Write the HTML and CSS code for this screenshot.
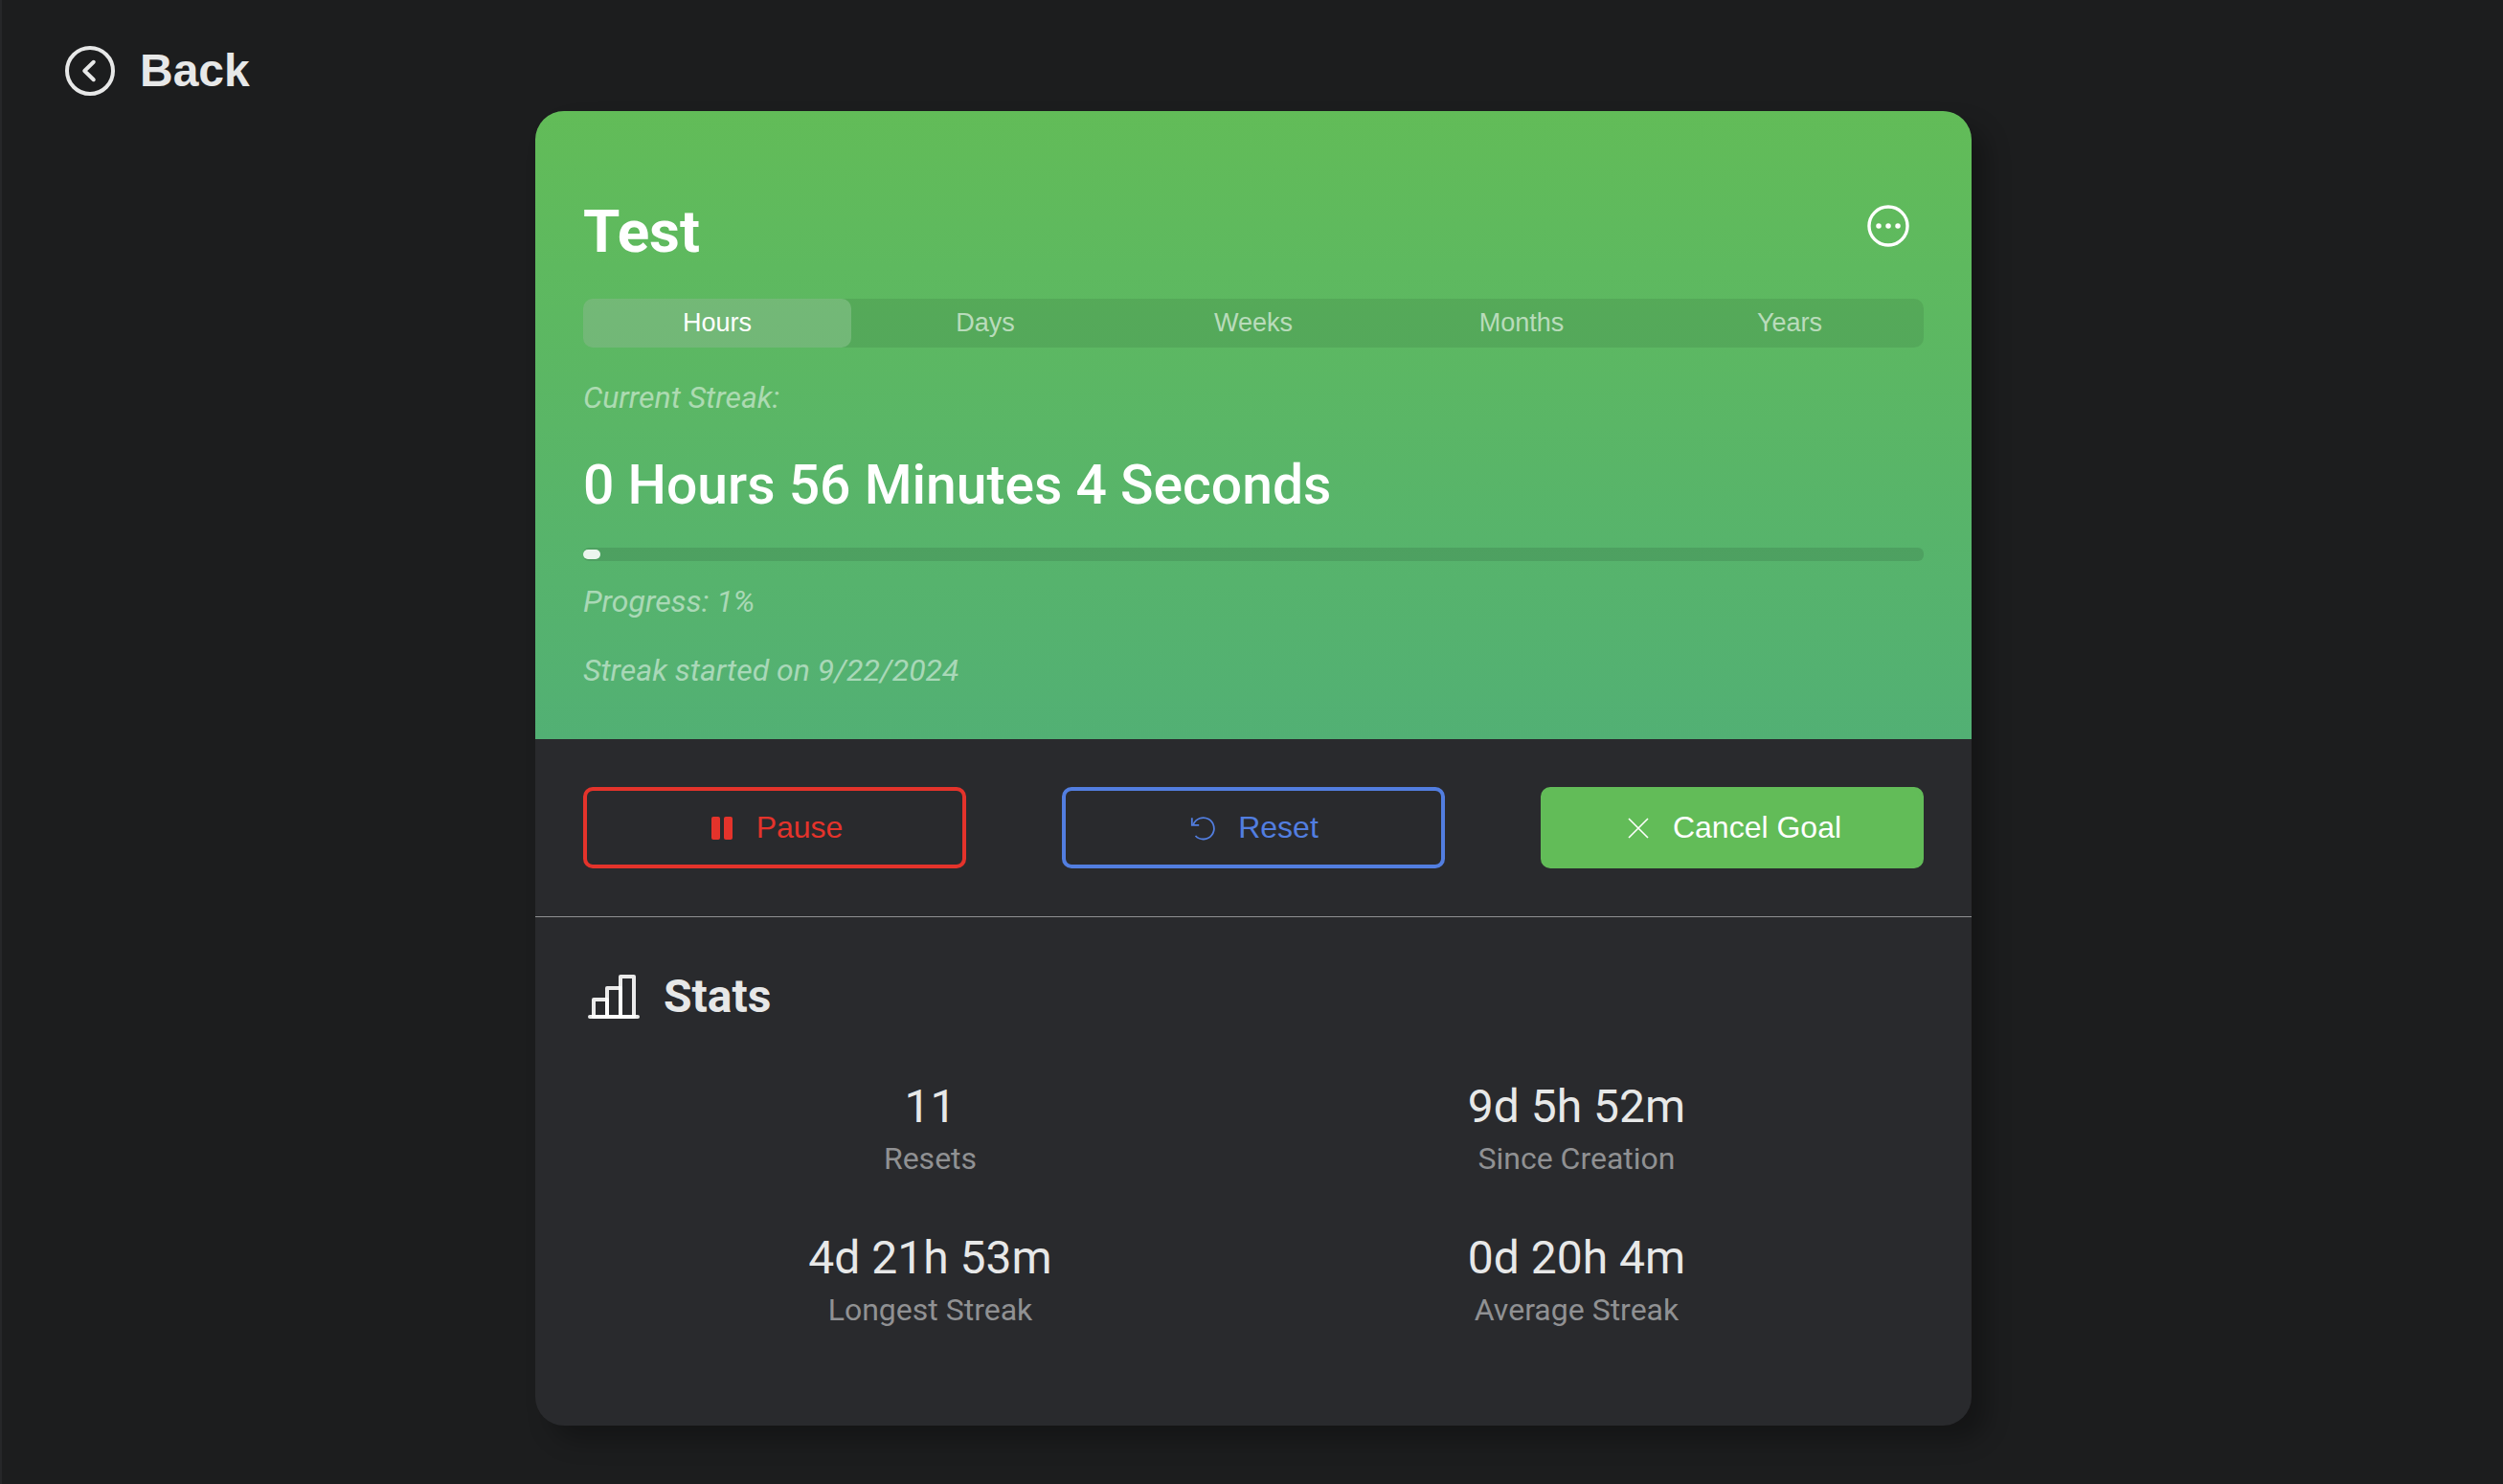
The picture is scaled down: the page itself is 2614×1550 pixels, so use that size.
FILE: index.html
```html
<!DOCTYPE html>
<html lang="en">
<head>
  <meta charset="utf-8">
  <meta name="viewport" content="width=device-width, initial-scale=1">
  <title>Test</title>
  <link rel="stylesheet" href="styles.css">
</head>
<body>
  <nav class="topbar">
    <a class="back" href="#">
      <svg class="icon-lg" viewBox="0 0 512 512" fill="none" stroke="currentColor" stroke-width="32" stroke-linecap="round" stroke-linejoin="round" aria-hidden="true">
        <circle cx="256" cy="256" r="192"/>
        <path d="M286 182l-76 74 76 74"/>
      </svg>
      Back
    </a>
  </nav>

  <main class="card">
    <header class="hero">
      <div class="hero-head">
        <h1 class="title">Test</h1>
        <button class="menu" type="button" aria-label="More options">
          <svg class="icon-md" viewBox="0 0 512 512" aria-hidden="true">
            <circle cx="256" cy="256" r="190" fill="none" stroke="currentColor" stroke-width="32"/>
            <g fill="currentColor">
              <circle cx="161" cy="256" r="26"/>
              <circle cx="256" cy="256" r="26"/>
              <circle cx="351" cy="256" r="26"/>
            </g>
          </svg>
        </button>
      </div>
      <div class="tabs" role="tablist" aria-label="Unit">
        <button class="tab tab-active" type="button" role="tab" aria-selected="true">Hours</button>
        <button class="tab" type="button" role="tab" aria-selected="false">Days</button>
        <button class="tab" type="button" role="tab" aria-selected="false">Weeks</button>
        <button class="tab" type="button" role="tab" aria-selected="false">Months</button>
        <button class="tab" type="button" role="tab" aria-selected="false">Years</button>
      </div>
      <p class="note">Current Streak:</p>
      <p class="streak">0 Hours 56 Minutes 4 Seconds</p>
      <div class="track" role="progressbar" aria-label="Progress" aria-valuemin="0" aria-valuemax="100" aria-valuenow="1">
        <div class="fill" style="width: 1%"></div>
      </div>
      <p class="note note-progress">Progress: 1%</p>
      <p class="note note-start">Streak started on 9/22/2024</p>
    </header>

    <section class="actions" aria-label="Actions">
      <button class="btn btn-pause" type="button">
        <svg class="icon-sm" viewBox="0 0 32 32" fill="currentColor" aria-hidden="true">
          <rect x="5" y="4" width="9" height="24" rx="2"/>
          <rect x="18" y="4" width="9" height="24" rx="2"/>
        </svg>
        Pause
      </button>
      <button class="btn btn-reset" type="button">
        <svg class="icon-sm" viewBox="0 0 32 32" fill="none" stroke="currentColor" stroke-width="1.8" stroke-linejoin="miter" aria-hidden="true">
          <path d="M7.5 24A11.2 11.2 0 1 0 5.2 12.3"/>
          <path d="M3.8 5.2v7.6h7.4"/>
        </svg>
        Reset
      </button>
      <button class="btn btn-cancel" type="button">
        <svg class="icon-sm" viewBox="0 0 32 32" fill="none" stroke="currentColor" stroke-width="1.6" aria-hidden="true">
          <path d="M6 6l20 20M26 6L6 26"/>
        </svg>
        Cancel Goal
      </button>
    </section>

    <section class="stats">
      <h2 class="stats-title">
        <svg class="icon-lg" viewBox="0 0 64 64" fill="none" stroke="currentColor" stroke-opacity="0.9" stroke-width="4" stroke-linejoin="round" stroke-linecap="round" aria-hidden="true">
          <rect x="11" y="35" width="14" height="18"/>
          <rect x="25" y="23" width="14" height="30"/>
          <rect x="39" y="11" width="14" height="42"/>
          <path d="M7 53h50"/>
        </svg>
        Stats
      </h2>
      <dl class="stats-grid">
        <div class="stat"><dd class="value">11</dd><dt class="label">Resets</dt></div>
        <div class="stat"><dd class="value">9d 5h 52m</dd><dt class="label">Since Creation</dt></div>
        <div class="stat"><dd class="value">4d 21h 53m</dd><dt class="label">Longest Streak</dt></div>
        <div class="stat"><dd class="value">0d 20h 4m</dd><dt class="label">Average Streak</dt></div>
      </dl>
    </section>
  </main>
</body>
</html>
```
FILE: styles.css
```css
* {
  box-sizing: border-box;
  margin: 0;
}

body {
  min-height: 100vh;
  padding-left: 2px;
  border-left: 2px solid #262729;
  background: #1c1d1e;
  color: #e7e8e8;
  font-family: Roboto, "Liberation Sans", sans-serif;
}

button {
  border: 0;
  padding: 0;
  background: none;
  color: inherit;
  font-family: "Liberation Sans", Arial, sans-serif;
  cursor: pointer;
}

svg {
  display: block;
  flex: none;
}

.icon-lg {
  width: 64px;
  height: 64px;
}

.icon-md {
  width: 54px;
  height: 54px;
}

.icon-sm {
  width: 32px;
  height: 32px;
}

.topbar {
  display: flex;
  padding: 42px 58px 10px;
}

.back {
  display: flex;
  align-items: center;
  gap: 20px;
  color: inherit;
  font: bold 48px/64px "Liberation Sans", Arial, sans-serif;
  text-decoration: none;
}

.card {
  max-width: 1500px;
  margin: 0 auto 60px;
  border-radius: 30px;
  overflow: hidden;
  background: #292a2d;
  box-shadow: 16px 16px 24px rgba(0, 0, 0, 0.27);
}

.hero {
  padding: 85px 50px 50px;
  background: linear-gradient(#62bc58, #52b074);
  color: #fff;
}

.hero-head {
  display: flex;
  align-items: flex-start;
  justify-content: space-between;
  margin-bottom: 29px;
}

.title {
  font-size: 62px;
  font-weight: 700;
  line-height: 82px;
}

.menu {
  padding: 8px 10px;
}

.tabs {
  display: grid;
  grid-template-columns: repeat(5, 1fr);
  margin-bottom: 30px;
  border-radius: 10px;
  background: rgba(0, 0, 0, 0.08);
}

.tab {
  height: 51px;
  border-radius: 10px;
  color: rgba(255, 255, 255, 0.6);
  font-size: 27px;
}

.tab-active {
  background: rgba(255, 255, 255, 0.18);
  color: #fff;
}

.note {
  color: rgba(255, 255, 255, 0.5);
  font-size: 32px;
  font-style: italic;
  line-height: 44px;
}

.streak {
  margin: 32px 0 28px;
  font-size: 57px;
  font-weight: 500;
  line-height: 75px;
}

.track {
  display: flex;
  align-items: center;
  height: 14px;
  border-radius: 6px;
  background: rgba(0, 0, 0, 0.1);
}

.fill {
  min-width: 18px;
  height: 10px;
  border-radius: 5px;
  background: #ebf5ee;
}

.note-progress {
  margin-top: 20px;
}

.note-start {
  margin-top: 28px;
}

.actions {
  display: grid;
  grid-template-columns: repeat(3, 1fr);
  gap: 100px;
  padding: 50px;
  border-bottom: 1px solid #8f9092;
}

.btn {
  display: flex;
  align-items: center;
  justify-content: center;
  gap: 20px;
  height: 85px;
  border: 4px solid;
  border-radius: 10px;
  font-size: 32px;
}

.btn-pause {
  color: #e4332b;
}

.btn-reset {
  color: #527ee0;
}

.btn-cancel {
  border-color: #62bc58;
  background: #62bc58;
  color: #fff;
}

.stats {
  padding: 50px 50px 99px;
}

.stats-title {
  display: flex;
  align-items: center;
  gap: 20px;
  font-size: 48px;
  font-weight: 700;
  line-height: 66px;
}

.stats-title svg {
  color: #fff;
}

.stats-grid {
  display: grid;
  grid-template-columns: repeat(2, 1fr);
  row-gap: 50px;
  margin-top: 50px;
  padding: 0 25px;
}

.stat {
  text-align: center;
}

.value {
  font-size: 48px;
  line-height: 64px;
}

.label {
  color: #909193;
  font-size: 32px;
  line-height: 44px;
}
```
